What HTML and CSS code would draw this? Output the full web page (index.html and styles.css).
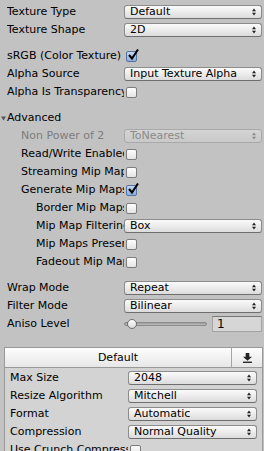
FILE: index.html
```html
<!DOCTYPE html>
<html lang="en">

<head>
	<meta charset="UTF-8">
	<title>Texture Import Settings</title>
	<link rel="stylesheet" href="styles.css">
</head>

<body>
	<div class="inspector">
		<!-- texture type -->
		<div class="group">
			<div class="row">
				<span class="label">Texture Type</span>
				<div class="popup"><span class="popup-text">Default</span><svg class="popup-arrow" viewBox="0 0 5 9"><path d="M2.5 0 L5 3.5 H0 Z M2.5 9 L5 5.5 H0 Z" /></svg></div>
			</div>
			<div class="row">
				<span class="label">Texture Shape</span>
				<div class="popup"><span class="popup-text">2D</span><svg class="popup-arrow" viewBox="0 0 5 9"><path d="M2.5 0 L5 3.5 H0 Z M2.5 9 L5 5.5 H0 Z" /></svg></div>
			</div>
		</div>

		<!-- alpha -->
		<div class="group">
			<div class="row">
				<span class="label">sRGB (Color Texture)</span>
				<span class="toggle checked"><svg class="check" viewBox="0 0 12 12"><path d="M2 6 L5 9.5 L11 0.5" /></svg></span>
			</div>
			<div class="row">
				<span class="label">Alpha Source</span>
				<div class="popup"><span class="popup-text">Input Texture Alpha</span><svg class="popup-arrow" viewBox="0 0 5 9"><path d="M2.5 0 L5 3.5 H0 Z M2.5 9 L5 5.5 H0 Z" /></svg></div>
			</div>
			<div class="row">
				<span class="label">Alpha Is Transparency</span>
				<span class="toggle"></span>
			</div>
		</div>

		<!-- advanced -->
		<div class="group">
			<div class="row">
				<span class="label foldout"><svg class="fold-arrow" viewBox="0 0 6 5"><path d="M0 0 H6 L3 5 Z" /></svg>Advanced</span>
			</div>
			<div class="row">
				<span class="label indent1 disabled">Non Power of 2</span>
				<div class="popup disabled"><span class="popup-text">ToNearest</span><svg class="popup-arrow" viewBox="0 0 5 9"><path d="M2.5 0 L5 3.5 H0 Z M2.5 9 L5 5.5 H0 Z" /></svg></div>
			</div>
			<div class="row">
				<span class="label indent1">Read/Write Enabled</span>
				<span class="toggle"></span>
			</div>
			<div class="row">
				<span class="label indent1">Streaming Mip Maps</span>
				<span class="toggle"></span>
			</div>
			<div class="row">
				<span class="label indent1">Generate Mip Maps</span>
				<span class="toggle checked"><svg class="check" viewBox="0 0 12 12"><path d="M2 6 L5 9.5 L11 0.5" /></svg></span>
			</div>
			<div class="row">
				<span class="label indent2">Border Mip Maps</span>
				<span class="toggle"></span>
			</div>
			<div class="row">
				<span class="label indent2">Mip Map Filtering</span>
				<div class="popup"><span class="popup-text">Box</span><svg class="popup-arrow" viewBox="0 0 5 9"><path d="M2.5 0 L5 3.5 H0 Z M2.5 9 L5 5.5 H0 Z" /></svg></div>
			</div>
			<div class="row">
				<span class="label indent2">Mip Maps Preserve Coverage</span>
				<span class="toggle"></span>
			</div>
			<div class="row">
				<span class="label indent2">Fadeout Mip Maps</span>
				<span class="toggle"></span>
			</div>
		</div>

		<!-- wrap / filter -->
		<div class="group">
			<div class="row">
				<span class="label">Wrap Mode</span>
				<div class="popup"><span class="popup-text">Repeat</span><svg class="popup-arrow" viewBox="0 0 5 9"><path d="M2.5 0 L5 3.5 H0 Z M2.5 9 L5 5.5 H0 Z" /></svg></div>
			</div>
			<div class="row">
				<span class="label">Filter Mode</span>
				<div class="popup"><span class="popup-text">Bilinear</span><svg class="popup-arrow" viewBox="0 0 5 9"><path d="M2.5 0 L5 3.5 H0 Z M2.5 9 L5 5.5 H0 Z" /></svg></div>
			</div>
			<div class="row">
				<span class="label">Aniso Level</span>
				<div class="slider">
					<div class="slider-track"></div>
					<div class="slider-thumb"></div>
				</div>
				<div class="number-field">1</div>
			</div>
		</div>

		<!-- platform settings -->
		<div class="platform-box">
			<div class="platform-tabs">
				<div class="platform-tab">Default</div>
				<div class="platform-button">
					<svg class="download-icon" viewBox="0 0 10 11"><path d="M3 0 H7 V4 H10 L5 8.5 L0 4 H3 Z" /><rect x="0" y="9.5" width="10" height="1.5" /></svg>
				</div>
			</div>
			<div class="platform-body">
				<div class="row">
					<span class="label">Max Size</span>
					<div class="popup"><span class="popup-text">2048</span><svg class="popup-arrow" viewBox="0 0 5 9"><path d="M2.5 0 L5 3.5 H0 Z M2.5 9 L5 5.5 H0 Z" /></svg></div>
				</div>
				<div class="row">
					<span class="label">Resize Algorithm</span>
					<div class="popup"><span class="popup-text">Mitchell</span><svg class="popup-arrow" viewBox="0 0 5 9"><path d="M2.5 0 L5 3.5 H0 Z M2.5 9 L5 5.5 H0 Z" /></svg></div>
				</div>
				<div class="row">
					<span class="label">Format</span>
					<div class="popup"><span class="popup-text">Automatic</span><svg class="popup-arrow" viewBox="0 0 5 9"><path d="M2.5 0 L5 3.5 H0 Z M2.5 9 L5 5.5 H0 Z" /></svg></div>
				</div>
				<div class="row">
					<span class="label">Compression</span>
					<div class="popup"><span class="popup-text">Normal Quality</span><svg class="popup-arrow" viewBox="0 0 5 9"><path d="M2.5 0 L5 3.5 H0 Z M2.5 9 L5 5.5 H0 Z" /></svg></div>
				</div>
				<div class="row">
					<span class="label">Use Crunch Compression</span>
					<span class="toggle"></span>
				</div>
			</div>
		</div>
	</div>
</body>

</html>
```

FILE: styles.css
```css
/* reset */
* {
	margin: 0;
	padding: 0;
	box-sizing: border-box;
}

html,
body {
	width: 100%;
	height: 100%;
	overflow: hidden;
}

body {
	background-color: #c2c2c2;
	font-family: "DejaVu Sans", "Liberation Sans", sans-serif;
	font-size: 11px;
	color: #000;
}

/* inspector column */
.inspector {
	padding: 3px 2px 0 7px;
}

.group + .group {
	margin-top: 8px;
}

.row {
	height: 18px;
	display: flex;
	align-items: center;
}

.label {
	flex: 0 0 117px;
	width: 117px;
	line-height: 18px;
	white-space: nowrap;
	overflow: hidden;
}

.indent1 {
	padding-left: 14px;
}

.indent2 {
	padding-left: 29px;
}

.label.disabled {
	color: #7d7d7d;
}

/* foldout */
.foldout {
	display: flex;
	align-items: center;
	margin-left: -7px;
	padding-left: 1px;
}

.fold-arrow {
	width: 5px;
	height: 5px;
	margin-right: 1px;
	fill: #555;
}

/* popup (dropdown) */
.popup {
	flex: 1;
	height: 14px;
	display: flex;
	align-items: center;
	justify-content: space-between;
	padding: 0 5px 0 5px;
	border: 1px solid #8c8c8c;
	border-bottom-color: #6e6e6e;
	border-radius: 3px;
	background: linear-gradient(#fbfbfb, #dcdcdc);
}

.popup-text {
	line-height: 12px;
}

.popup-arrow {
	width: 4px;
	height: 8px;
	fill: #222;
}

.popup.disabled {
	border-color: #a9a9a9;
	background: linear-gradient(#d4d4d4, #c9c9c9);
	color: #8a8a8a;
}

.popup.disabled .popup-arrow {
	fill: #8a8a8a;
}

/* toggle */
.toggle {
	position: relative;
	width: 11px;
	height: 11px;
	margin-left: 2px;
	border: 1px solid #7c7c7c;
	border-radius: 2px;
	background: linear-gradient(#fdfdfd, #e4e4e4);
}

.toggle.checked {
	border-color: #53719f;
	background: linear-gradient(#c6d6ee, #8eaedb);
}

.check {
	position: absolute;
	left: 0;
	top: -3px;
	width: 12px;
	height: 12px;
	fill: none;
	stroke: #000;
	stroke-width: 2;
}

/* slider */
.slider {
	position: relative;
	flex: 1;
	height: 16px;
	margin-right: 5px;
	display: flex;
	align-items: center;
}

.slider-track {
	width: 100%;
	height: 4px;
	border: 1px solid #8a8a8a;
	border-radius: 2px;
	background: linear-gradient(#9c9c9c, #bdbdbd);
}

.slider-thumb {
	position: absolute;
	left: 3px;
	top: 3px;
	width: 10px;
	height: 10px;
	border: 1px solid #6f6f6f;
	border-radius: 50%;
	background: linear-gradient(#ffffff, #d8d8d8);
}

.number-field {
	flex: 0 0 50px;
	height: 16px;
	padding-left: 4px;
	font-size: 12px;
	line-height: 14px;
	border: 1px solid #a3a3a3;
	border-top-color: #777;
	background-color: #d6d6d6;
}

/* platform settings box */
.platform-box {
	margin: 14px -1px 0 -3px;
	border: 1px solid #999;
	background-color: #d3d3d3;
}

.platform-tabs {
	height: 20px;
	display: flex;
	border-bottom: 1px solid #999;
	background: linear-gradient(#fdfdfd, #e7e7e7);
}

.platform-tab {
	flex: 1;
	text-align: center;
	line-height: 19px;
}

.platform-button {
	width: 31px;
	display: flex;
	justify-content: center;
	align-items: center;
	border-left: 1px solid #a5a5a5;
}

.download-icon {
	width: 9px;
	height: 10px;
	fill: #222;
}

.platform-body {
	padding: 1px 5px 0 5px;
}

.platform-body .label {
	flex: 0 0 118px;
	width: 118px;
}
```
